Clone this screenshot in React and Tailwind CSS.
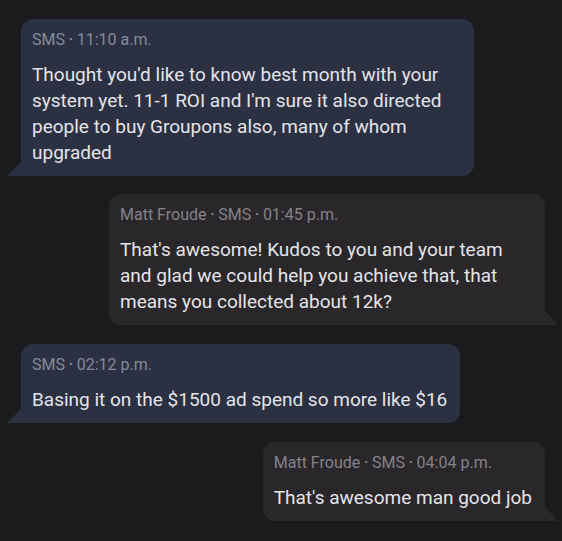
import React from "react";

const messages = [
  {
    side: "left",
    meta: ["SMS", "11:10 a.m."],
    text: "Thought you'd like to know best month with your system yet. 11-1 ROI and I'm sure it also directed people to buy Groupons also, many of whom upgraded",
    width: "w-[453px]",
    mt: "mt-[19px]",
  },
  {
    side: "right",
    meta: ["Matt Froude", "SMS", "01:45 p.m."],
    text: "That's awesome! Kudos to you and your team and glad we could help you achieve that, that means you collected about 12k?",
    width: "w-[436px]",
    mt: "mt-[18px]",
  },
  {
    side: "left",
    meta: ["SMS", "02:12 p.m."],
    text: "Basing it on the $1500 ad spend so more like $16",
    width: "w-fit",
    mt: "mt-[19px]",
  },
  {
    side: "right",
    meta: ["Matt Froude", "SMS", "04:04 p.m."],
    text: "That's awesome man good job",
    width: "w-fit",
    mt: "mt-[19px]",
  },
];

function Bubble({ msg }) {
  const left = msg.side === "left";
  return (
    <div className={`relative ${msg.width} ${msg.mt} ${left ? "self-start ml-[21px]" : "self-end mr-[17px]"}`}>
      <div
        className={`pl-[11px] pr-[13px] pt-[12px] pb-[10px] ${
          left
            ? "bg-[#2b3142] rounded-t-[12px] rounded-br-[12px]"
            : "bg-[#2a272b] rounded-t-[12px] rounded-bl-[12px]"
        }`}
      >
        <div
          className={`h-[18px] flex items-center whitespace-nowrap text-[16px] leading-[18px] ${
            left ? "text-[#858a98]" : "text-[#858288]"
          }`}
        >
          {msg.meta.map((m, i) => (
            <React.Fragment key={i}>
              {i > 0 && <span className="mx-[4px] text-[11px] leading-[18px]">•</span>}
              <span>{m}</span>
            </React.Fragment>
          ))}
        </div>
        <p className="mt-[13px] text-[19px] leading-[26px] text-[#e4e4e8]">{msg.text}</p>
      </div>
      {left ? (
        <svg className="absolute bottom-0 -left-[14px]" width="14" height="14" viewBox="0 0 14 14">
          <path d="M14 0 L14 14 L0 14 Z" fill="#2b3142" />
        </svg>
      ) : (
        <svg className="absolute bottom-0 -right-[13px]" width="13" height="14" viewBox="0 0 13 14">
          <path d="M0 0 L0 14 L13 14 Z" fill="#2a272b" />
        </svg>
      )}
    </div>
  );
}

export default function App() {
  return (
    <div className="min-h-[541px] w-[562px] bg-[#1b1b1d] flex flex-col font-['Roboto',sans-serif]">
      {messages.map((m, i) => (
        <Bubble key={i} msg={m} />
      ))}
    </div>
  );
}
